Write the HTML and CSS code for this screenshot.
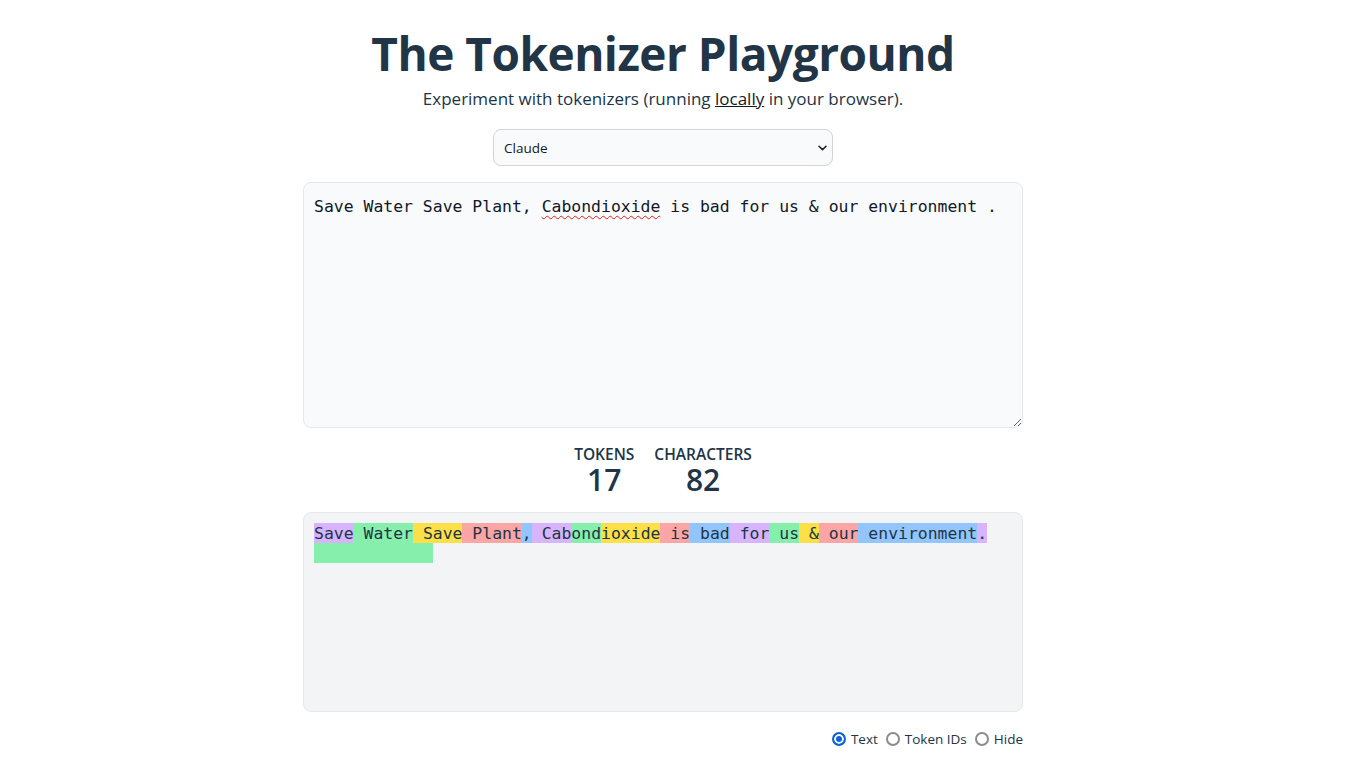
FILE: index.html
```html
<!DOCTYPE html>
<html lang="en">
<head>
<meta charset="UTF-8">
<title>The Tokenizer Playground</title>
<link rel="stylesheet" href="styles.css">
</head>
<body>
<div id="root">
  <main class="app">
    <header class="intro">
      <h1 class="title">The Tokenizer Playground</h1>
      <h2 class="subtitle">Experiment with tokenizers (running <a class="link" href="#">locally</a> in your browser).</h2>
    </header>
    <div class="select-wrap">
      <select class="model-select"><option>Claude</option></select>
      <svg class="chevron" width="9" height="6" viewBox="0 0 9 6" aria-hidden="true"><path d="M1 1.2 L4.5 4.6 L8 1.2" fill="none" stroke="#222" stroke-width="1.5" stroke-linecap="round" stroke-linejoin="round"/></svg>
    </div>
    <div class="input-box">Save Water Save Plant, <span class="misspelled">Cabondioxide</span> is bad for us &amp; our environment .</div>
    <div class="stats">
      <div class="stat"><h2 class="stat-label">Tokens</h2><h3 class="stat-value">17</h3></div>
      <div class="stat"><h2 class="stat-label">Characters</h2><h3 class="stat-value">82</h3></div>
    </div>
    <div class="output"><span class="tk purple">Save</span><span class="tk green"> Water</span><span class="tk yellow"> Save</span><span class="tk red"> Plant</span><span class="tk blue">,</span><span class="tk purple"> Cab</span><span class="tk green">ond</span><span class="tk yellow">ioxide</span><span class="tk red"> is</span><span class="tk blue"> bad</span><span class="tk purple"> for</span><span class="tk green"> us</span><span class="tk yellow"> &amp;</span><span class="tk red"> our</span><span class="tk blue"> environment</span><span class="tk purple">.</span>
<span class="tk green">            </span></div>
    <div class="radios">
      <label class="option"><input type="radio" name="mode" class="radio" checked><span>Text</span></label>
      <label class="option"><input type="radio" name="mode" class="radio"><span>Token IDs</span></label>
      <label class="option"><input type="radio" name="mode" class="radio"><span>Hide</span></label>
    </div>
  </main>
</div>
</body>
</html>
```

FILE: styles.css
```css
* { box-sizing: border-box; }
html, body { margin: 0; padding: 0; }
body {
  background: #ffffff;
  color: #213547;
  font-family: "Open Sans", "Noto Sans", sans-serif;
}
#root {
  text-align: center;
  padding: 29px 37px 32px 0;
}
.app {
  width: 720px;
  margin: 0 auto;
  display: flex;
  flex-direction: column;
  align-items: center;
  gap: 16px;
}
.intro { display: flex; flex-direction: column; align-items: center; }
.title {
  font-size: 46px;
  line-height: 48px;
  font-weight: 700;
  margin: 0 0 8px;
  letter-spacing: -0.5px;
  color: #213547;
}
.subtitle {
  font-size: 17px;
  line-height: 28px;
  font-weight: 400;
  margin: 0;
  color: #213547;
}
.link { color: #111827; text-decoration: underline; }
.select-wrap { position: relative; width: 340px; }
.model-select {
  appearance: none;
  -webkit-appearance: none;
  display: block;
  width: 100%;
  height: 37px;
  padding: 0 10px;
  font-family: "Open Sans", sans-serif;
  font-size: 13.5px;
  color: #111827;
  background: #f9fafb;
  border: 1px solid #d1d5db;
  border-radius: 8px;
  outline: none;
}
.chevron { position: absolute; right: 6px; top: 16px; pointer-events: none; }
.input-box {
  width: 100%;
  height: 246px;
  padding: 10px;
  text-align: left;
  font-family: "DejaVu Sans Mono", "Liberation Mono", monospace;
  font-size: 16.45px;
  line-height: 28px;
  color: #111827;
  background: #f9fafb;
  border: 1px solid #e5e7eb;
  border-radius: 8px;
  white-space: pre-wrap;
  overflow: auto;
  resize: both;
}
.misspelled {
  text-decoration: underline wavy #e0201a;
  text-decoration-thickness: 1px;
  text-underline-offset: 3px;
}
.stats { display: flex; justify-content: center; gap: 20px; }
.stat { display: flex; flex-direction: column; }
.stat-label {
  margin: 0;
  font-size: 15.5px;
  line-height: 20px;
  font-weight: 600;
  text-transform: uppercase;
  color: #213547;
}
.stat-value {
  margin: 0;
  font-size: 30px;
  line-height: 32px;
  font-weight: 600;
  color: #213547;
}
.output {
  width: 100%;
  height: 200px;
  padding: 10px;
  text-align: left;
  font-family: "DejaVu Sans Mono", "Liberation Mono", monospace;
  font-size: 16.45px;
  line-height: 20px;
  color: #213547;
  background: #f3f4f6;
  border: 1px solid #e5e7eb;
  border-radius: 8px;
  white-space: pre-wrap;
  overflow-y: auto;
}
.tk { padding: 0.5px 0; }
.purple { background: #d8b4fe; }
.green { background: #86efac; }
.yellow { background: #fde047; }
.red { background: #fca5a5; }
.blue { background: #93c5fd; }
.radios {
  align-self: flex-end;
  display: flex;
  align-items: center;
  gap: 8px;
  font-size: 13.5px;
  color: #213547;
}
.option { display: inline-flex; align-items: center; gap: 5px; height: 22px; }
.radio {
  appearance: none;
  -webkit-appearance: none;
  margin: 0;
  width: 14px;
  height: 14px;
  border-radius: 50%;
  border: 2px solid #8b8b91;
  background: #ffffff;
}
.radio:checked {
  border-color: #0f62d9;
  background: #0f62d9;
  box-shadow: inset 0 0 0 2px #ffffff;
}
```
